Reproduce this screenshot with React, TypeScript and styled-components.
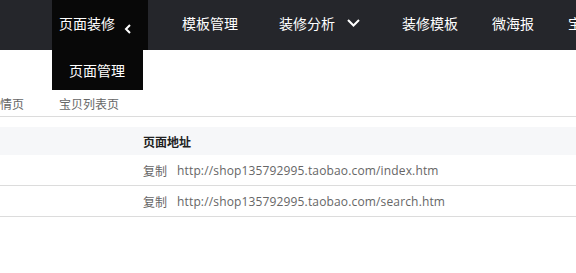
import React from "react";
import styled, { createGlobalStyle } from "styled-components";

const Global = createGlobalStyle`
  html, body { margin: 0; padding: 0; background: #fff; overflow: hidden; }
  body { font-family: "Noto Sans CJK SC", "Noto Sans", sans-serif; }
`;

const Page = styled.div`
  width: 576px;
  height: 273px;
  position: relative;
  overflow: hidden;
`;

const NavBar = styled.div`
  height: 50px;
  background: #25262b;
  display: flex;
  align-items: stretch;
  padding-left: 52px;
  white-space: nowrap;
`;

const NavItem = styled.div<{ $active?: boolean; $pl?: number; $pr?: number }>`
  position: relative;
  display: flex;
  align-items: center;
  padding: 0 ${(p) => p.$pr ?? 17}px 4px ${(p) => p.$pl ?? 17}px;
  background: ${(p) => (p.$active ? "#080808" : "transparent")};
  color: #fff;
  font-size: 14px;
  flex-shrink: 0;
`;

const Chevron = styled.svg<{ $gap: number; $dy: number }>`
  margin-left: ${(p) => p.$gap}px;
  margin-top: ${(p) => p.$dy}px;
  display: block;
`;

const Dropdown = styled.div`
  position: absolute;
  left: 0;
  top: 50px;
  width: 91px;
  height: 40px;
  background: #080808;
  color: #fff;
  font-size: 14px;
  display: flex;
  align-items: center;
  padding-left: 17px;
  box-sizing: border-box;
  z-index: 2;
`;

const Main = styled.div`
  padding-top: 40px;
`;

const Tabs = styled.div`
  display: flex;
  gap: 35px;
  margin-left: -36px;
  height: 26px;
  align-items: center;
  border-bottom: 1px solid #dcdcdc;
  font-size: 12px;
  color: #666;
  white-space: nowrap;
`;

const Table = styled.div`
  margin-top: 10px;
`;

const Row = styled.div<{ $head?: boolean }>`
  display: grid;
  grid-template-columns: 143px 1fr;
  align-items: center;
  height: ${(p) => (p.$head ? 28 : 30)}px;
  background: ${(p) => (p.$head ? "#f6f7f9" : "#fff")};
  border-bottom: ${(p) => (p.$head ? "none" : "1px solid #dcdcdc")};
  font-size: 12px;
  white-space: nowrap;
`;

const HeadCell = styled.div`
  font-weight: bold;
  color: #222;
`;

const Cell = styled.div`
  display: flex;
  align-items: center;
  gap: 10px;
  color: #666;
`;

const Url = styled.span`
  font-family: "Open Sans", "Noto Sans", sans-serif;
  font-size: 12px;
  letter-spacing: 0.15px;
  color: #666;
`;

export default function App() {
  return (
    <Page>
      <Global />
      <NavBar>
        <NavItem $active $pl={7} $pr={17}>
          页面装修
          <Chevron $gap={9} $dy={12} width="7" height="10" viewBox="0 0 7 10">
            <path d="M6 1 L2 5 L6 9" stroke="#fff" strokeWidth="2" fill="none" />
          </Chevron>
          <Dropdown>页面管理</Dropdown>
        </NavItem>
        <NavItem $pl={34}>模板管理</NavItem>
        <NavItem $pl={24} $pr={25}>
          装修分析
          <Chevron $gap={12} $dy={0} width="13" height="8" viewBox="0 0 13 8">
            <path d="M1 1 L6.5 6.5 L12 1" stroke="#fff" strokeWidth="2" fill="none" />
          </Chevron>
        </NavItem>
        <NavItem>装修模板</NavItem>
        <NavItem>微海报</NavItem>
        <NavItem>宝贝管理</NavItem>
      </NavBar>
      <Main>
        <Tabs>
          <span>宝贝详情页</span>
          <span>宝贝列表页</span>
        </Tabs>
        <Table>
          <Row $head>
            <div />
            <HeadCell>页面地址</HeadCell>
          </Row>
          <Row>
            <div />
            <Cell>
              复制<Url>http://shop135792995.taobao.com/index.htm</Url>
            </Cell>
          </Row>
          <Row>
            <div />
            <Cell>
              复制<Url>http://shop135792995.taobao.com/search.htm</Url>
            </Cell>
          </Row>
        </Table>
      </Main>
    </Page>
  );
}
